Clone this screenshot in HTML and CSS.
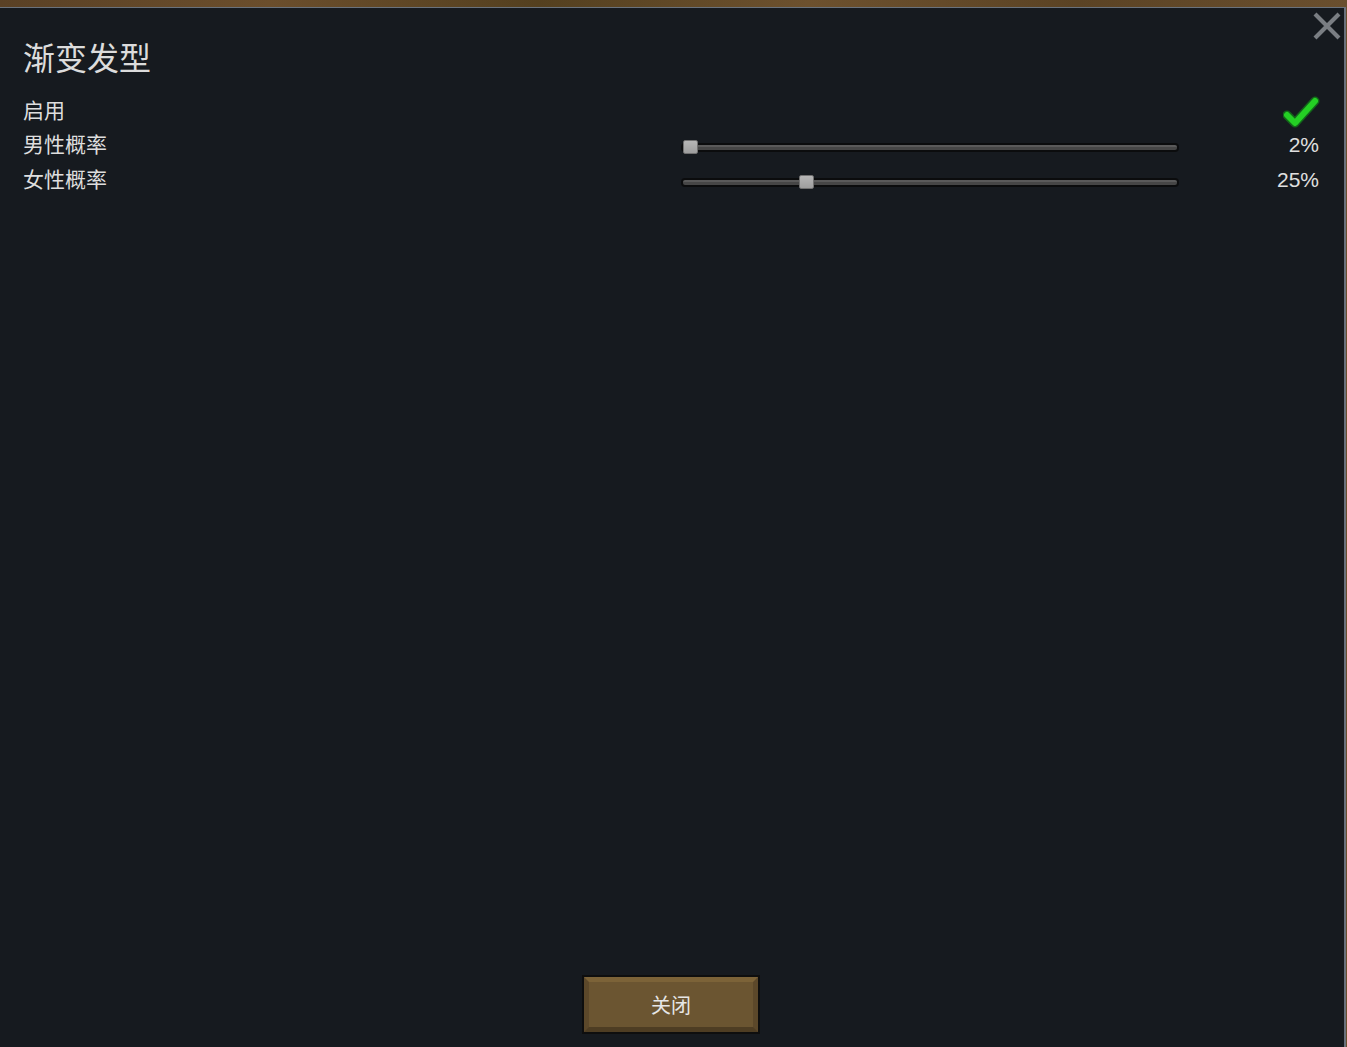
FILE: index.html
```html
<!DOCTYPE html>
<html lang="zh-CN">
<head>
<meta charset="utf-8">
<title>渐变发型</title>
<link rel="stylesheet" href="styles.css">
</head>
<body>
<div class="window">
  <div class="close-x" aria-label="关闭">
    <svg width="28" height="28" viewBox="0 0 28 28"><path d="M2 2 L26 26 M26 2 L2 26" stroke="#7a7e83" stroke-width="4.2" fill="none"/></svg>
  </div>
  <h1 class="title">渐变发型</h1>
  <div class="rows">
    <div class="row">
      <span class="label">启用</span>
      <span class="slot"></span>
      <span class="value">
        <svg class="check" width="37" height="33" viewBox="0 0 37 33"><path d="M4 19 L12 27 L32 5" stroke="#13651a" stroke-width="9" stroke-linecap="round" stroke-linejoin="round" fill="none"/><path d="M4 19 L12 27 L32 5" stroke="#24d024" stroke-width="6" stroke-linecap="round" stroke-linejoin="round" fill="none"/></svg>
      </span>
    </div>
    <div class="row">
      <span class="label">男性概率</span>
      <span class="slot"><span class="track"><span class="handle" style="left:0px"></span></span></span>
      <span class="value">2%</span>
    </div>
    <div class="row">
      <span class="label">女性概率</span>
      <span class="slot"><span class="track"><span class="handle" style="left:116px"></span></span></span>
      <span class="value">25%</span>
    </div>
  </div>
  <div class="footer">
    <div class="btn"><span class="btn-inner">关闭</span></div>
  </div>
</div>
</body>
</html>
```
FILE: styles.css
```css
html, body {
  margin: 0;
  padding: 0;
  height: 100%;
}
body {
  background: linear-gradient(90deg, #5a4125 0%, #6b4e2c 20%, #54401f 40%, #6d512e 60%, #5b4324 80%, #6a4f2e 100%);
  overflow: hidden;
  font-family: "Noto Sans", "Noto Sans CJK SC", sans-serif;
}
.window {
  position: relative;
  box-sizing: border-box;
  margin-top: 7px;
  width: 1346px;
  height: calc(100vh - 7px);
  background: #161a1f;
  border-top: 1px solid #6a727c;
  border-right: 2px solid #6a727c;
  padding: 29px 25px 13px 23px;
  display: flex;
  flex-direction: column;
}
.close-x {
  position: absolute;
  top: 4px;
  right: 3px;
  width: 28px;
  height: 28px;
}
.close-x svg { display: block; }
.title {
  margin: 0;
  font-family: "Noto Sans CJK SC", sans-serif;
  font-weight: 400;
  font-size: 32px;
  line-height: 38px;
  color: #dcdcdc;
}
.rows {
  margin-top: 17px;
  display: flex;
  flex-direction: column;
}
.row {
  display: grid;
  grid-template-columns: 1fr 498px 140px;
  align-items: center;
  height: 35px;
}
.label {
  font-family: "Noto Sans CJK SC", sans-serif;
  font-size: 21px;
  line-height: 30px;
  color: #dedede;
  position: relative;
  top: -2px;
}
.slot {
  display: flex;
  align-items: center;
  height: 100%;
  padding-top: 5px;
  box-sizing: border-box;
}
.track {
  position: relative;
  display: block;
  width: 498px;
  height: 9px;
  box-sizing: border-box;
  border: 2px solid #0b0c0d;
  border-radius: 4px;
  background: linear-gradient(#5a5a5a 0%, #5a5a5a 50%, #464646 50%, #464646 100%);
}
.handle {
  position: absolute;
  top: -5px;
  width: 15px;
  height: 14px;
  box-sizing: border-box;
  background: linear-gradient(#b6b6b6, #9e9e9e);
  border: 1px solid #707070;
  border-radius: 2px;
}
.value {
  justify-self: end;
  font-family: "Liberation Sans", Arial, sans-serif;
  font-size: 21px;
  color: #e0e0e0;
  display: flex;
  align-items: center;
}
.check {
  display: block;
  margin-right: -1px;
  margin-top: 4px;
}
.footer {
  margin-top: auto;
  display: flex;
  justify-content: center;
  flex: none;
}
.btn {
  flex: none;
  width: 178px;
  height: 59px;
  box-sizing: border-box;
  border: 2px solid #0e0e0e;
  background: #0e0e0e;
}
.btn-inner {
  display: flex;
  align-items: center;
  justify-content: center;
  box-sizing: border-box;
  width: 100%;
  height: 100%;
  background: #6b5531;
  border-top: 5px solid #7c6338;
  border-left: 5px solid #5c482a;
  border-right: 5px solid #5c482a;
  border-bottom: 5px solid #4e3d23;
  font-family: "Noto Sans CJK SC", sans-serif;
  font-size: 20px;
  color: #e6e6e6;
}
```
